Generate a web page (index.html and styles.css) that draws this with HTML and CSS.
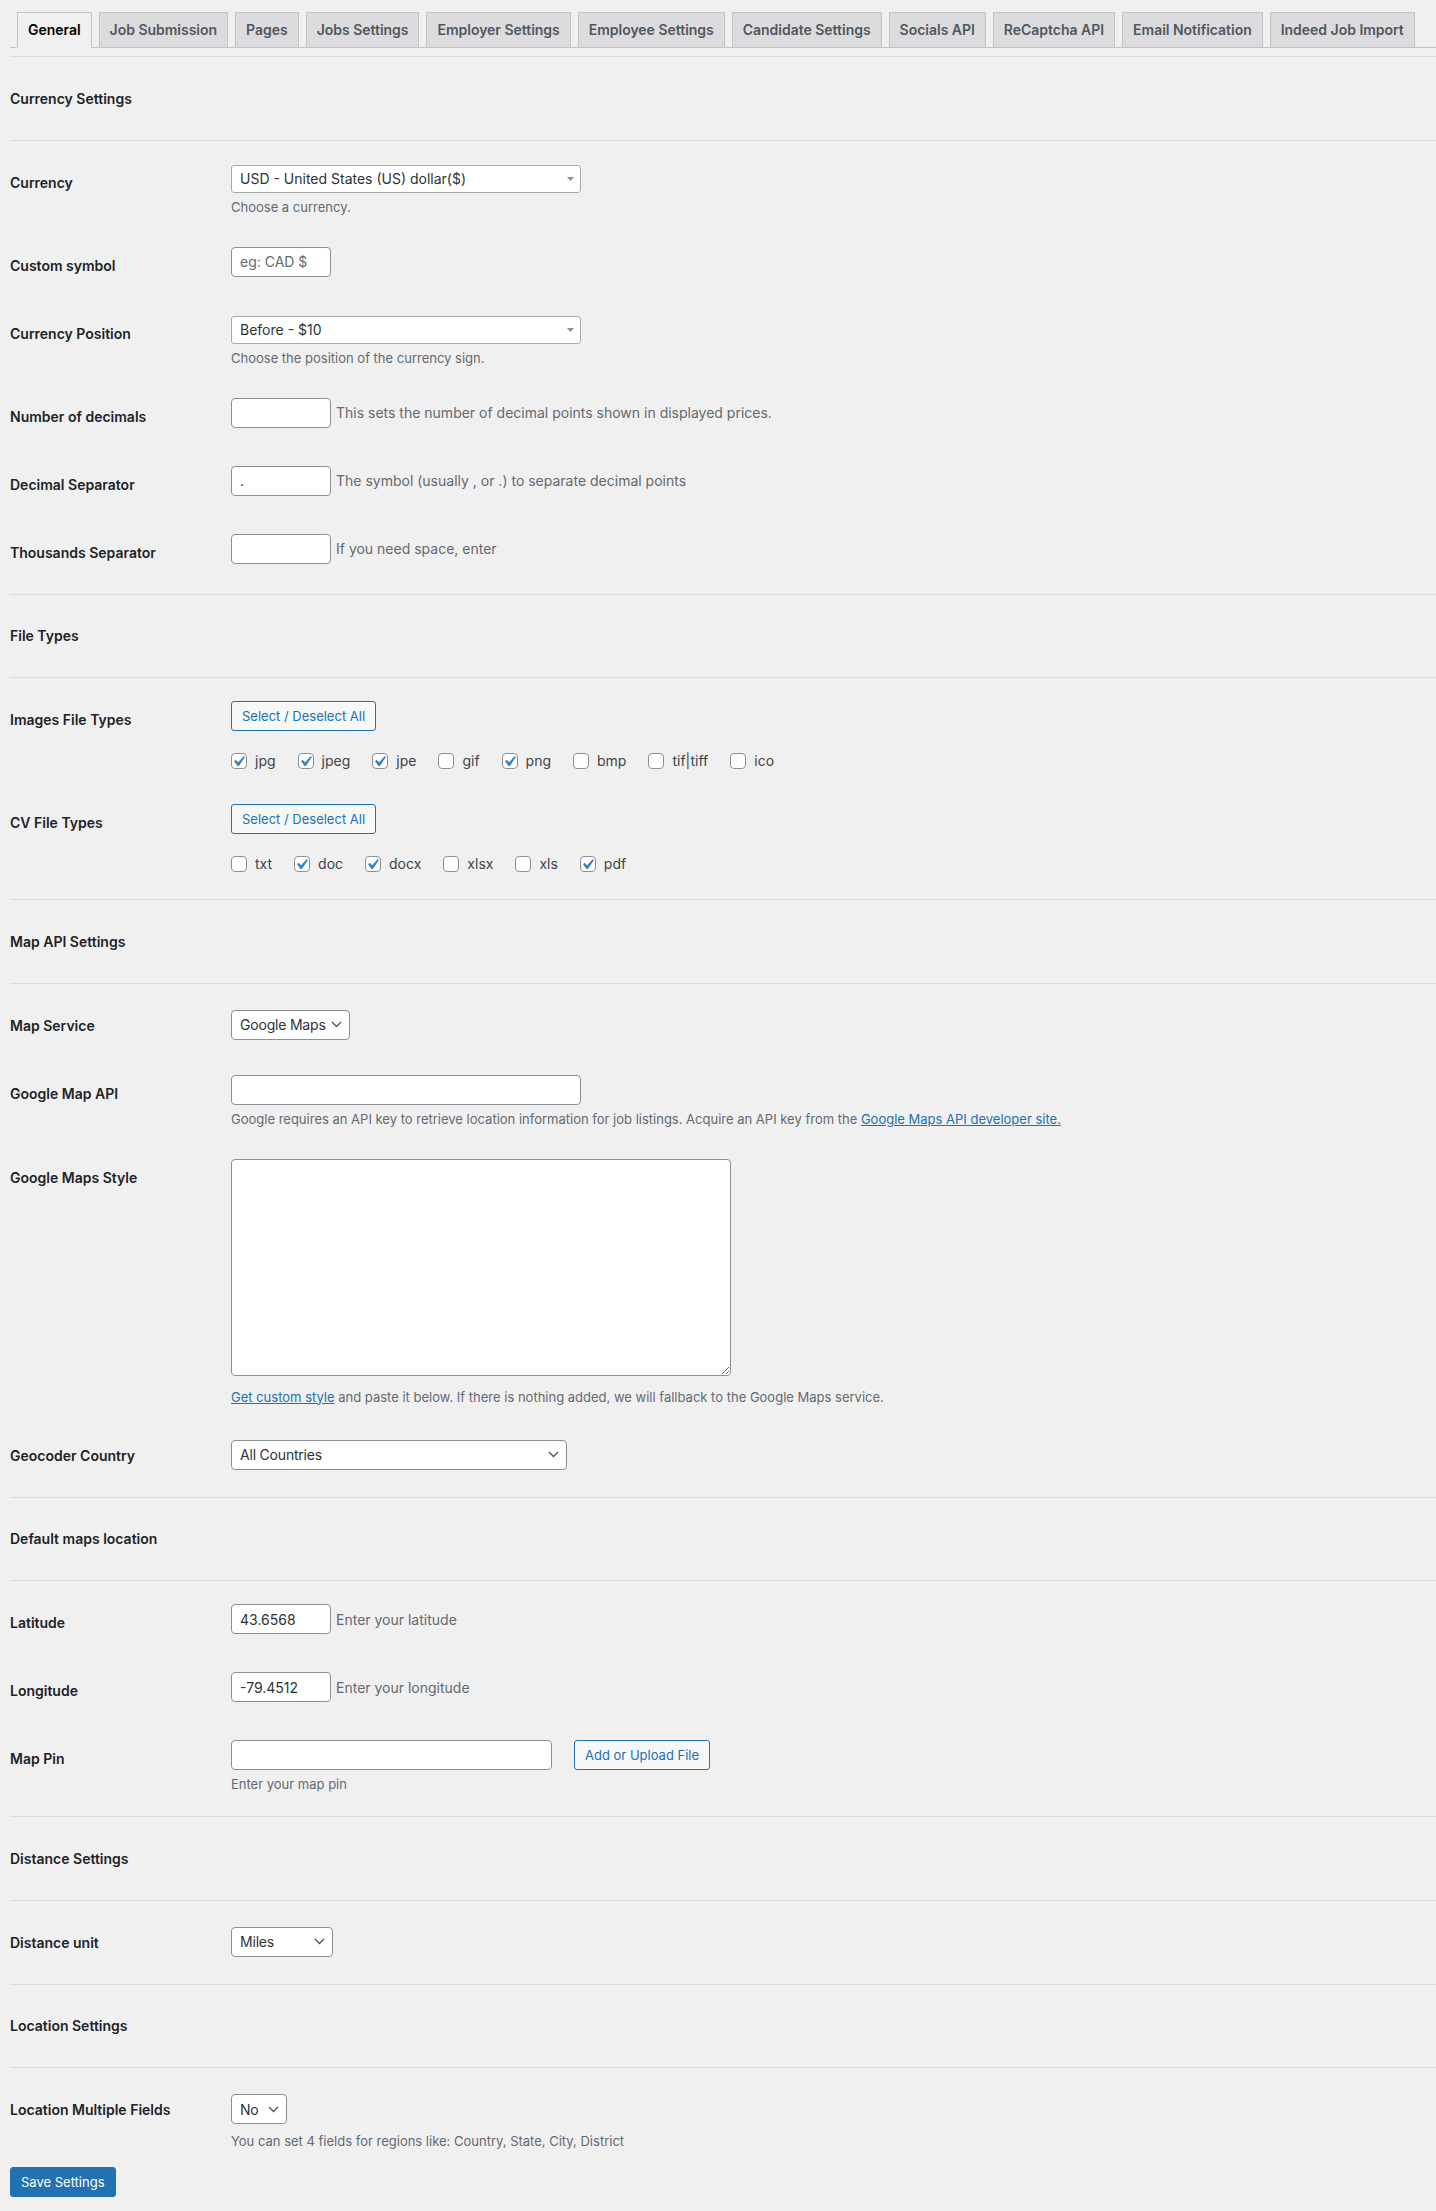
FILE: index.html
```html
<!DOCTYPE html>
<html lang="en">
<head>
    <meta charset="UTF-8">
    <meta name="viewport" content="width=device-width, initial-scale=1.0">
    <title>Settings - General</title>
    <link rel="stylesheet" href="styles.css">
</head>
<body>

<div class="wrap">
    <nav class="tabs">
        <a class="tab active" href="#">General</a>
        <a class="tab" href="#">Job Submission</a>
        <a class="tab" href="#">Pages</a>
        <a class="tab" href="#">Jobs Settings</a>
        <a class="tab" href="#">Employer Settings</a>
        <a class="tab" href="#">Employee Settings</a>
        <a class="tab" href="#">Candidate Settings</a>
        <a class="tab" href="#">Socials API</a>
        <a class="tab" href="#">ReCaptcha API</a>
        <a class="tab" href="#">Email Notification</a>
        <a class="tab" href="#">Indeed Job Import</a>
    </nav>

    <form class="settings">
        <!-- Currency -->
        <section class="group first">
            <h3 class="group-title">Currency Settings</h3>
            <div class="group-body">
                <div class="row tall">
                    <div class="label">Currency</div>
                    <div class="field">
                        <div class="select old w350">
                            <span>USD - United States (US) dollar($)</span>
                            <svg class="tri" width="7" height="4" viewBox="0 0 7 4"><path d="M0 0h7L3.5 4z"/></svg>
                        </div>
                        <p class="desc">Choose a currency.</p>
                    </div>
                </div>
                <div class="row">
                    <div class="label">Custom symbol</div>
                    <div class="field">
                        <input class="input w100" type="text" placeholder="eg: CAD $">
                    </div>
                </div>
                <div class="row tall">
                    <div class="label">Currency Position</div>
                    <div class="field">
                        <div class="select old w350">
                            <span>Before - $10</span>
                            <svg class="tri" width="7" height="4" viewBox="0 0 7 4"><path d="M0 0h7L3.5 4z"/></svg>
                        </div>
                        <p class="desc">Choose the position of the currency sign.</p>
                    </div>
                </div>
                <div class="row">
                    <div class="label">Number of decimals</div>
                    <div class="field inline">
                        <input class="input w100" type="text">
                        <span class="note">This sets the number of decimal points shown in displayed prices.</span>
                    </div>
                </div>
                <div class="row">
                    <div class="label">Decimal Separator</div>
                    <div class="field inline">
                        <input class="input w100" type="text" value=".">
                        <span class="note">The symbol (usually , or .) to separate decimal points</span>
                    </div>
                </div>
                <div class="row">
                    <div class="label">Thousands Separator</div>
                    <div class="field inline">
                        <input class="input w100" type="text">
                        <span class="note">If you need space, enter</span>
                    </div>
                </div>
            </div>
        </section>

        <!-- File types -->
        <section class="group">
            <h3 class="group-title">File Types</h3>
            <div class="group-body">
                <div class="row tall">
                    <div class="label">Images File Types</div>
                    <div class="field">
                        <button class="btn" type="button">Select / Deselect All</button>
                        <div class="checks">
                            <label class="check"><span class="cb on"><svg viewBox="0 0 20 20"><path d="M14.83 4.89l1.34.94-5.81 8.38H9.02L5.78 9.67l1.34-1.25 2.57 2.4z"/></svg></span>jpg</label>
                            <label class="check"><span class="cb on"><svg viewBox="0 0 20 20"><path d="M14.83 4.89l1.34.94-5.81 8.38H9.02L5.78 9.67l1.34-1.25 2.57 2.4z"/></svg></span>jpeg</label>
                            <label class="check"><span class="cb on"><svg viewBox="0 0 20 20"><path d="M14.83 4.89l1.34.94-5.81 8.38H9.02L5.78 9.67l1.34-1.25 2.57 2.4z"/></svg></span>jpe</label>
                            <label class="check"><span class="cb"></span>gif</label>
                            <label class="check"><span class="cb on"><svg viewBox="0 0 20 20"><path d="M14.83 4.89l1.34.94-5.81 8.38H9.02L5.78 9.67l1.34-1.25 2.57 2.4z"/></svg></span>png</label>
                            <label class="check"><span class="cb"></span>bmp</label>
                            <label class="check"><span class="cb"></span>tif|tiff</label>
                            <label class="check"><span class="cb"></span>ico</label>
                        </div>
                    </div>
                </div>
                <div class="row tall">
                    <div class="label">CV File Types</div>
                    <div class="field">
                        <button class="btn" type="button">Select / Deselect All</button>
                        <div class="checks">
                            <label class="check"><span class="cb"></span>txt</label>
                            <label class="check"><span class="cb on"><svg viewBox="0 0 20 20"><path d="M14.83 4.89l1.34.94-5.81 8.38H9.02L5.78 9.67l1.34-1.25 2.57 2.4z"/></svg></span>doc</label>
                            <label class="check"><span class="cb on"><svg viewBox="0 0 20 20"><path d="M14.83 4.89l1.34.94-5.81 8.38H9.02L5.78 9.67l1.34-1.25 2.57 2.4z"/></svg></span>docx</label>
                            <label class="check"><span class="cb"></span>xlsx</label>
                            <label class="check"><span class="cb"></span>xls</label>
                            <label class="check"><span class="cb on"><svg viewBox="0 0 20 20"><path d="M14.83 4.89l1.34.94-5.81 8.38H9.02L5.78 9.67l1.34-1.25 2.57 2.4z"/></svg></span>pdf</label>
                        </div>
                    </div>
                </div>
            </div>
        </section>

        <!-- Map API -->
        <section class="group">
            <h3 class="group-title">Map API Settings</h3>
            <div class="group-body">
                <div class="row">
                    <div class="label">Map Service</div>
                    <div class="field">
                        <div class="select w119">
                            <span>Google Maps</span>
                            <svg class="chev" width="11" height="7" viewBox="0 0 11 7"><path d="M1 1l4.5 4.5L10 1"/></svg>
                        </div>
                    </div>
                </div>
                <div class="row tall">
                    <div class="label">Google Map API</div>
                    <div class="field">
                        <input class="input w350" type="text">
                        <p class="desc">Google requires an API key to retrieve location information for job listings. Acquire an API key from the <a href="#">Google Maps API developer site.</a></p>
                    </div>
                </div>
                <div class="row tall">
                    <div class="label">Google Maps Style</div>
                    <div class="field">
                        <textarea class="textarea"></textarea>
                        <p class="desc after-area"><a href="#">Get custom style</a> and paste it below. If there is nothing added, we will fallback to the Google Maps service.</p>
                    </div>
                </div>
                <div class="row">
                    <div class="label">Geocoder Country</div>
                    <div class="field">
                        <div class="select w336">
                            <span>All Countries</span>
                            <svg class="chev" width="11" height="7" viewBox="0 0 11 7"><path d="M1 1l4.5 4.5L10 1"/></svg>
                        </div>
                    </div>
                </div>
            </div>
        </section>

        <!-- Default location -->
        <section class="group">
            <h3 class="group-title">Default maps location</h3>
            <div class="group-body">
                <div class="row">
                    <div class="label">Latitude</div>
                    <div class="field inline">
                        <input class="input w100" type="text" value="43.6568">
                        <span class="note">Enter your latitude</span>
                    </div>
                </div>
                <div class="row">
                    <div class="label">Longitude</div>
                    <div class="field inline">
                        <input class="input w100" type="text" value="-79.4512">
                        <span class="note">Enter your longitude</span>
                    </div>
                </div>
                <div class="row tall">
                    <div class="label">Map Pin</div>
                    <div class="field">
                        <div class="upload">
                            <input class="input w321" type="text">
                            <button class="btn" type="button">Add or Upload File</button>
                        </div>
                        <p class="desc">Enter your map pin</p>
                    </div>
                </div>
            </div>
        </section>

        <!-- Distance -->
        <section class="group">
            <h3 class="group-title">Distance Settings</h3>
            <div class="group-body">
                <div class="row">
                    <div class="label">Distance unit</div>
                    <div class="field">
                        <div class="select w102">
                            <span>Miles</span>
                            <svg class="chev" width="11" height="7" viewBox="0 0 11 7"><path d="M1 1l4.5 4.5L10 1"/></svg>
                        </div>
                    </div>
                </div>
            </div>
        </section>

        <!-- Location -->
        <section class="group">
            <h3 class="group-title">Location Settings</h3>
            <div class="group-body last">
                <div class="row tall">
                    <div class="label">Location Multiple Fields</div>
                    <div class="field">
                        <div class="select w56">
                            <span>No</span>
                            <svg class="chev" width="11" height="7" viewBox="0 0 11 7"><path d="M1 1l4.5 4.5L10 1"/></svg>
                        </div>
                        <p class="desc after-select">You can set 4 fields for regions like: Country, State, City, District</p>
                    </div>
                </div>
            </div>
        </section>

        <p class="submit">
            <button class="btn primary" type="button">Save Settings</button>
        </p>
    </form>
</div>

</body>
</html>
```

FILE: styles.css
```css
html {
    background: #f0f0f1;
}
body {
    margin: 0;
    font-family: Inter, "Noto Sans", sans-serif;
    font-size: 13px;
    color: #3c434a;
}
.wrap {
    padding: 0 0 12px 10px;
}

/* tabs */
.tabs {
    display: flex;
    padding-top: 12px;
    border-bottom: 1px solid #c3c4c7;
}
.tab {
    margin-left: 7px;
    margin-bottom: -1px;
    padding: 5px 10px;
    font-size: 14px;
    font-weight: 600;
    line-height: 24px;
    letter-spacing: -0.02px;
    color: #50575e;
    background: #dcdcde;
    border: 1px solid #c3c4c7;
    text-decoration: none;
    white-space: nowrap;
}
.tab.active {
    background: #f0f0f1;
    color: #000;
    border-bottom-color: #f0f0f1;
}

/* groups */
.settings {
    margin: 0;
}
.group.first {
    margin-top: 8px;
}
.group-title {
    margin: 0;
    height: 82.5px;
    display: flex;
    align-items: center;
    border-top: 1px solid #dcdcde;
    border-bottom: 1px solid #dcdcde;
    font-size: 14px;
    font-weight: 600;
    color: #1d2327;
}
.group-body {
    padding: 4px 0 11px;
}
.group-body.last {
    padding-bottom: 5px;
}
.row {
    display: flex;
    padding: 19px 0;
}
.row.tall {
    padding-bottom: 13px;
}
.label {
    width: 221px;
    flex-shrink: 0;
    padding-top: 9px;
    line-height: 19px;
    font-size: 14px;
    font-weight: 600;
    color: #1d2327;
}
.field {
    flex: 1;
    min-width: 0;
}
.field.inline {
    display: flex;
    align-items: center;
    gap: 5px;
}
.note {
    font-size: 14px;
    color: #646970;
}
.desc {
    margin: 6px 0 0;
    line-height: 16px;
    font-size: 13px;
    color: #646970;
}
.desc.after-area {
    margin-top: 13px;
}
.desc.after-select {
    margin-top: 12px;
}
.desc a {
    color: #2271b1;
}

/* controls */
.input {
    box-sizing: border-box;
    height: 30px;
    margin: 0;
    padding: 0 8px;
    border: 1px solid #8c8f94;
    border-radius: 4px;
    background: #fff;
    font-family: Inter, "Noto Sans", sans-serif;
    font-size: 14px;
    color: #2c3338;
    outline: none;
}
.input::placeholder {
    color: #646970;
}
.textarea {
    display: block;
    box-sizing: border-box;
    width: 500px;
    height: 217px;
    margin: 0;
    padding: 2px 6px;
    border: 1px solid #8c8f94;
    border-radius: 4px;
    background: #fff;
    font-family: Inter, "Noto Sans", sans-serif;
    font-size: 14px;
}
.select {
    box-sizing: border-box;
    display: flex;
    align-items: center;
    justify-content: space-between;
    height: 30px;
    margin: 3px 0 -3px;
    padding: 0 7px 0 8px;
    border: 1px solid #8c8f94;
    border-radius: 4px;
    background: #fff;
    font-size: 14px;
    letter-spacing: -0.2px;
    color: #2c3338;
    white-space: nowrap;
}
.select.old {
    height: 28px;
    margin: 1px 0;
    padding-right: 6px;
    border-color: #a7aaad;
    border-radius: 3px;
    letter-spacing: 0;
}
.tri path {
    fill: #8c8f94;
}
.chev path {
    fill: none;
    stroke: #50575e;
    stroke-width: 1.4;
}
.w56 { width: 56px; }
.w100 { width: 100px; }
.w102 { width: 102px; }
.w119 { width: 119px; }
.w321 { width: 321px; }
.w336 { width: 336px; }
.w350 { width: 350px; }

.upload {
    display: flex;
    gap: 22px;
}

/* checkboxes */
.checks {
    display: flex;
    align-items: center;
    gap: 22px;
    height: 23px;
    margin-top: 18px;
}
.check {
    display: flex;
    align-items: center;
    gap: 8px;
    font-size: 14px;
    color: #3c434a;
}
.cb {
    position: relative;
    box-sizing: border-box;
    width: 16px;
    height: 16px;
    border: 1px solid #8c8f94;
    border-radius: 4px;
    background: #fff;
}
.cb svg {
    position: absolute;
    left: -4px;
    top: -3px;
    width: 21px;
    height: 21px;
}
.cb svg path {
    fill: #3582c4;
}

/* buttons */
.btn {
    box-sizing: border-box;
    height: 30px;
    margin: 0;
    padding: 0 10px;
    font-family: Inter, "Noto Sans", sans-serif;
    font-size: 13px;
    color: #2271b1;
    background: #f6f7f7;
    border: 1px solid #2271b1;
    border-radius: 3px;
    cursor: pointer;
}
.btn.primary {
    color: #fff;
    background: #2271b1;
}
.submit {
    margin: 0;
}
```
